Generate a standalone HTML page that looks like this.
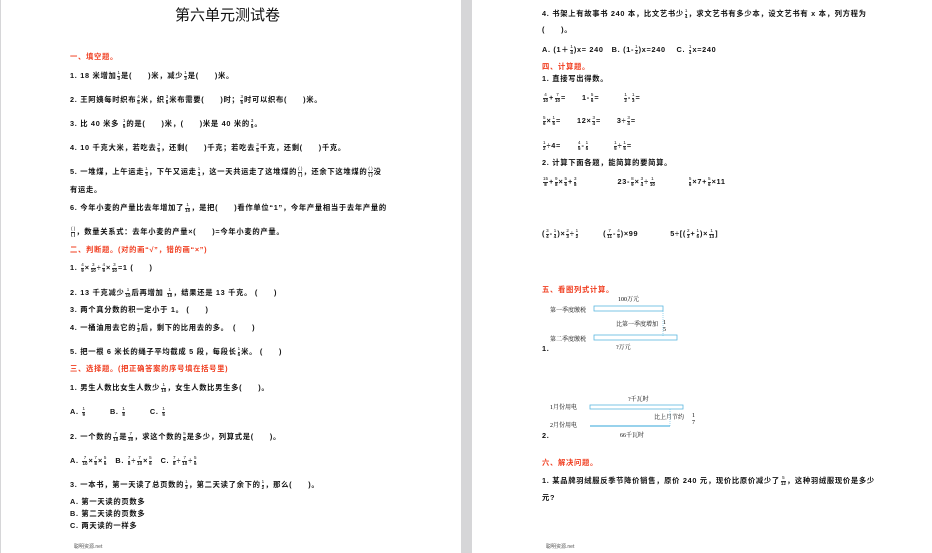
<!DOCTYPE html>
<html><head><meta charset="utf-8">
<style>
body{margin:0;width:932px;height:553px;background:#d6d6d8;position:relative;overflow:hidden;font-family:"Liberation Sans","Noto Sans CJK SC",sans-serif;color:#111}
.pg{position:absolute;top:0;height:553px;background:#fff}
.l{position:absolute;font-size:7.3px;white-space:nowrap;line-height:9px;font-weight:bold;letter-spacing:0.7px}
.r{color:#f03c1e}
.f{display:inline-block;vertical-align:middle;text-align:center;font-size:4.5px;line-height:4.5px;margin:0 1px;letter-spacing:0}
.f b{display:block;border-bottom:0.6px solid #333;font-weight:normal}
.f i{display:block;font-style:normal}
.ft{position:absolute;font-size:5px;color:#555}
svg{position:absolute}
</style></head><body>
<div class="pg" style="left:1px;width:460px"></div>
<div class="pg" style="left:472px;width:460px"></div>

<div style="position:absolute;left:175px;top:4px;font-size:15px;font-family:'Noto Sans CJK SC',sans-serif">第六单元测试卷</div>
<div class="l r" style="left:70px;top:52px">一、填空题。</div>
<div class="l" style="left:70px;top:71px">1. 18 米增加<span class="f"><b>1</b><i>3</i></span>是(　　)米，减少<span class="f"><b>1</b><i>3</i></span>是(　　)米。</div>
<div class="l" style="left:70px;top:95px">2. 王阿姨每时织布<span class="f"><b>4</b><i>5</i></span>米，织<span class="f"><b>3</b><i>5</i></span>米布需要(　　)时；<span class="f"><b>3</b><i>5</i></span>时可以织布(　　)米。</div>
<div class="l" style="left:70px;top:119px">3. 比 40 米多 <span class="f"><b>1</b><i>5</i></span>的是(　　)米，(　　)米是 40 米的<span class="f"><b>3</b><i>5</i></span>。</div>
<div class="l" style="left:70px;top:143px">4. 10 千克大米，若吃去<span class="f"><b>3</b><i>5</i></span>，还剩(　　)千克；若吃去<span class="f"><b>3</b><i>5</i></span>千克，还剩(　　)千克。</div>
<div class="l" style="left:70px;top:167px">5. 一堆煤，上午运走<span class="f"><b>1</b><i>3</i></span>，下午又运走<span class="f"><b>1</b><i>4</i></span>，这一天共运走了这堆煤的<span class="f"><b>( )</b><i>( )</i></span>，还余下这堆煤的<span class="f"><b>( )</b><i>( )</i></span>没</div>
<div class="l" style="left:70px;top:185px">有运走。</div>
<div class="l" style="left:70px;top:203px">6. 今年小麦的产量比去年增加了<span class="f"><b>1</b><i>10</i></span>，是把(　　)看作单位“1”，今年产量相当于去年产量的</div>
<div class="l" style="left:70px;top:227px"><span class="f"><b>( )</b><i>( )</i></span>，数量关系式：去年小麦的产量×(　　)=今年小麦的产量。</div>
<div class="l r" style="left:70px;top:245px">二、判断题。(对的画“√”，错的画“×”)</div>
<div class="l" style="left:70px;top:263px">1. <span class="f"><b>4</b><i>9</i></span>×<span class="f"><b>3</b><i>10</i></span>÷<span class="f"><b>4</b><i>9</i></span>×<span class="f"><b>3</b><i>10</i></span>=1 (　　)</div>
<div class="l" style="left:70px;top:288px">2. 13 千克减少<span class="f"><b>1</b><i>10</i></span>后再增加 <span class="f"><b>1</b><i>10</i></span>，结果还是 13 千克。 (　　)</div>
<div class="l" style="left:70px;top:305px">3. 两个真分数的积一定小于 1。 (　　)</div>
<div class="l" style="left:70px;top:323px">4. 一桶油用去它的<span class="f"><b>1</b><i>2</i></span>后，剩下的比用去的多。　(　　)</div>
<div class="l" style="left:70px;top:347px">5. 把一根 6 米长的绳子平均截成 5 段，每段长<span class="f"><b>1</b><i>5</i></span>米。 (　　)</div>
<div class="l r" style="left:70px;top:364px">三、选择题。(把正确答案的序号填在括号里)</div>
<div class="l" style="left:70px;top:383px">1. 男生人数比女生人数少<span class="f"><b>1</b><i>10</i></span>，女生人数比男生多(　　)。</div>
<div class="l" style="left:70px;top:407px">A. <span class="f"><b>1</b><i>9</i></span>　　　B. <span class="f"><b>1</b><i>8</i></span>　　　C. <span class="f"><b>1</b><i>5</i></span></div>
<div class="l" style="left:70px;top:432px">2. 一个数的<span class="f"><b>7</b><i>10</i></span>是<span class="f"><b>7</b><i>20</i></span>，求这个数的<span class="f"><b>5</b><i>6</i></span>是多少，列算式是(　　)。</div>
<div class="l" style="left:70px;top:456px">A. <span class="f"><b>7</b><i>10</i></span>×<span class="f"><b>7</b><i>8</i></span>×<span class="f"><b>5</b><i>6</i></span>　B. <span class="f"><b>7</b><i>8</i></span>÷<span class="f"><b>7</b><i>10</i></span>×<span class="f"><b>5</b><i>6</i></span>　C. <span class="f"><b>7</b><i>8</i></span>÷<span class="f"><b>7</b><i>10</i></span>÷<span class="f"><b>5</b><i>6</i></span></div>
<div class="l" style="left:70px;top:480px">3. 一本书，第一天读了总页数的<span class="f"><b>1</b><i>3</i></span>，第二天读了余下的<span class="f"><b>1</b><i>2</i></span>，那么(　　)。</div>
<div class="l" style="left:70px;top:497px">A. 第一天读的页数多</div>
<div class="l" style="left:70px;top:509px">B. 第二天读的页数多</div>
<div class="l" style="left:70px;top:521px">C. 两天读的一样多</div>
<div class="ft" style="left:74px;top:543px">聪明资源.net</div>

<div class="l" style="left:542px;top:9px">4. 书架上有故事书 240 本，比文艺书少<span class="f"><b>1</b><i>4</i></span>，求文艺书有多少本，设文艺书有 x 本，列方程为</div>
<div class="l" style="left:542px;top:25px">(　　)。</div>
<div class="l" style="left:542px;top:45px">A. (1＋<span class="f"><b>1</b><i>4</i></span>)x= 240　B. (1-<span class="f"><b>1</b><i>4</i></span>)x=240　 C. <span class="f"><b>1</b><i>4</i></span>x=240</div>
<div class="l r" style="left:542px;top:62px">四、计算题。</div>
<div class="l" style="left:542px;top:74px">1. 直接写出得数。</div>
<div class="l" style="left:542px;top:93px"><span class="f"><b>4</b><i>10</i></span>+<span class="f"><b>7</b><i>10</i></span>=　　1-<span class="f"><b>5</b><i>6</i></span>=　　　<span class="f"><b>1</b><i>2</i></span>-<span class="f"><b>1</b><i>3</i></span>=</div>
<div class="l" style="left:542px;top:116px"><span class="f"><b>5</b><i>6</i></span>×<span class="f"><b>1</b><i>5</i></span>=　　12×<span class="f"><b>3</b><i>4</i></span>=　　3÷<span class="f"><b>3</b><i>4</i></span>=</div>
<div class="l" style="left:542px;top:141px"><span class="f"><b>1</b><i>2</i></span>÷4=　　<span class="f"><b>4</b><i>5</i></span>-<span class="f"><b>1</b><i>5</i></span>　　　<span class="f"><b>1</b><i>5</i></span>÷<span class="f"><b>1</b><i>5</i></span>=</div>
<div class="l" style="left:542px;top:158px">2. 计算下面各题，能简算的要简算。</div>
<div class="l" style="left:542px;top:177px"><span class="f"><b>15</b><i>8</i></span>+<span class="f"><b>9</b><i>8</i></span>×<span class="f"><b>5</b><i>6</i></span>+<span class="f"><b>3</b><i>8</i></span>　　　　　23-<span class="f"><b>8</b><i>9</i></span>×<span class="f"><b>3</b><i>4</i></span>÷<span class="f"><b>1</b><i>10</i></span>　　　　<span class="f"><b>5</b><i>6</i></span>×7+<span class="f"><b>5</b><i>6</i></span>×11</div>
<div class="l" style="left:542px;top:229px">(<span class="f"><b>3</b><i>4</i></span>-<span class="f"><b>1</b><i>4</i></span>)×<span class="f"><b>2</b><i>3</i></span>÷<span class="f"><b>1</b><i>2</i></span>　　　(<span class="f"><b>7</b><i>11</i></span>-<span class="f"><b>4</b><i>9</i></span>)×99　　　　5÷[(<span class="f"><b>2</b><i>3</i></span>+<span class="f"><b>1</b><i>5</i></span>)×<span class="f"><b>1</b><i>13</i></span>]</div>
<div class="l r" style="left:542px;top:285px">五、看图列式计算。</div>
<svg style="left:540px;top:292px" width="200" height="60" font-size="6" font-family="Liberation Serif,Noto Serif CJK SC,serif">
<text x="78" y="9">100万元</text>
<text x="10" y="20">第一季度缴税</text>
<rect x="54" y="14" width="69" height="5" fill="none" stroke="#5bb8e0" stroke-width="0.8"/>
<text x="76" y="34">比第一季度增加</text><text x="123" y="32">1</text><text x="123" y="39">5</text>
<line x1="123" y1="19" x2="123" y2="44" stroke="#5bb8e0" stroke-width="0.6" stroke-dasharray="1,1"/>
<text x="10" y="49">第二季度缴税</text>
<rect x="54" y="43" width="83" height="5" fill="none" stroke="#5bb8e0" stroke-width="0.8"/>
<text x="76" y="57">?万元</text>
</svg>
<div class="l" style="left:542px;top:344px">1.</div>
<svg style="left:540px;top:392px" width="200" height="50" font-size="6" font-family="Liberation Serif,Noto Serif CJK SC,serif">
<text x="88" y="9">?千瓦时</text>
<text x="10" y="17">1月份用电</text>
<rect x="50" y="13" width="93" height="4" fill="none" stroke="#5bb8e0" stroke-width="0.8"/>
<text x="114" y="27">比上月节约</text><text x="152" y="25">1</text><text x="152" y="32">7</text>
<text x="10" y="35">2月份用电</text>
<line x1="50" y1="34" x2="130" y2="34" stroke="#5bb8e0" stroke-width="1.2"/>
<line x1="130" y1="17" x2="130" y2="34" stroke="#5bb8e0" stroke-width="0.6" stroke-dasharray="1,1"/>
<text x="80" y="45">66千瓦时</text>
</svg>
<div class="l" style="left:542px;top:431px">2.</div>
<div class="l r" style="left:542px;top:458px">六、解决问题。</div>
<div class="l" style="left:542px;top:476px">1. 某品牌羽绒服反季节降价销售，原价 240 元，现价比原价减少了<span class="f"><b>5</b><i>12</i></span>，这种羽绒服现价是多少</div>
<div class="l" style="left:542px;top:493px">元?</div>
<div class="ft" style="left:546px;top:543px">聪明资源.net</div>
</body></html>
